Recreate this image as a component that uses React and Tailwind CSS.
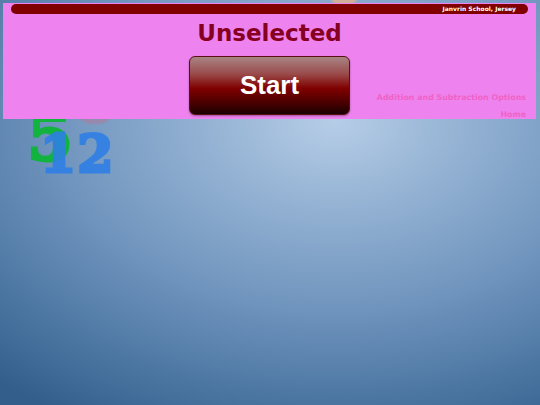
import React from "react";

function FloatingNumbers() {
  return (
    <div className="pointer-events-none absolute inset-0 z-0">
      {/* soft orange ball peeking over the panel */}
      <div className="absolute left-[328px] top-[-24px] h-[30px] w-[32px] rounded-full bg-[#e6b08a] opacity-80 blur-[1px]" />
      {/* faint mauve ring just under the panel */}
      <div className="absolute left-[76px] top-[92px] h-[32px] w-[38px] rounded-full border-[5px] border-[#b07a9c] opacity-60 blur-[1px]" />
      <span className="absolute left-[27px] top-[104px] font-['DejaVu_Serif',serif] text-[66px] font-bold leading-none text-[#12b33e] [-webkit-text-stroke:3px_#12b33e]">
        5
      </span>
      <span className="absolute left-[40px] top-[128px] font-['DejaVu_Serif',serif] text-[52px] font-bold leading-none tracking-[1px] text-[#2f7fe6] opacity-90 [-webkit-text-stroke:3px_#2f7fe6]">
        12
      </span>
    </div>
  );
}

export default function App() {
  return (
    <div className="relative h-[405px] w-[540px] overflow-hidden bg-[radial-gradient(ellipse_95%_85%_at_62%_30%,#b6cde7_0%,#94b2d3_25%,#6f94bd_55%,#4d77a3_80%,#335e8c_100%)]">
      <FloatingNumbers />

      <div className="relative z-10 ml-[3px] mt-[3px] flex h-[116px] w-[533px] flex-col bg-[#ee82ee]">
        <div className="mx-[8px] mt-[1px] flex h-[10px] items-center justify-end rounded-full bg-[#800000] pr-[12px]">
          <span className="font-['DejaVu_Sans',sans-serif] text-[6px] font-bold leading-none text-white">
            Janvrin School, Jersey
          </span>
        </div>

        <h1 className="mt-[5px] text-center font-['DejaVu_Sans',sans-serif] text-[23px] font-bold leading-[28px] text-[#860022]">
          Unselected
        </h1>

        <div className="mt-[9px] grid flex-1 grid-cols-[1fr_161px_1fr]">
          <div />
          <button className="h-[59px] rounded-[6px] border border-[#5a1010] bg-[linear-gradient(to_bottom,#a88484_0%,#9a4a4a_30%,#800000_55%,#4a0000_80%,#1a0000_100%)] font-['Liberation_Sans',Arial,sans-serif] text-[26px] font-bold text-white shadow-[0_1px_2px_rgba(0,0,0,0.35)]">
            Start
          </button>
          <div className="flex flex-col items-end justify-end pr-[10px] font-['DejaVu_Sans',sans-serif] text-[7.9px] font-bold leading-none text-[#f063c6]">
            <span>Addition and Subtraction Options</span>
            <span className="mt-[9px]">Home</span>
          </div>
        </div>
      </div>
    </div>
  );
}
